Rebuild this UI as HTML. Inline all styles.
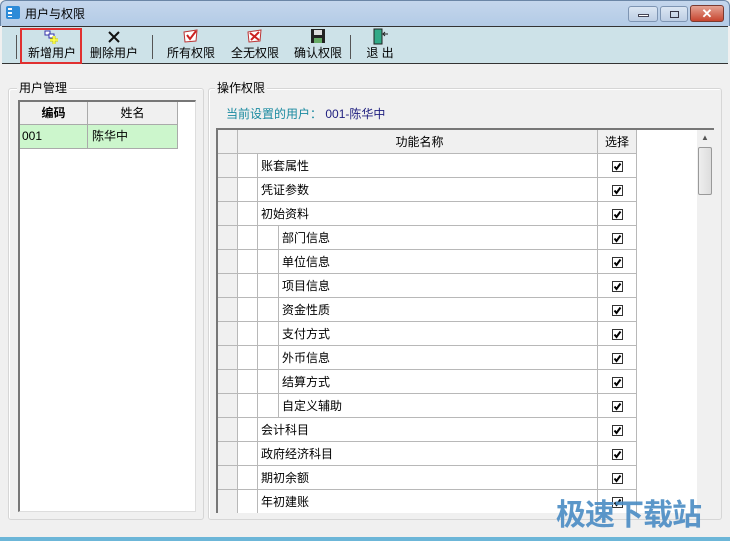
<!DOCTYPE html><html><head><meta charset="utf-8"><style>
*{box-sizing:border-box;margin:0;padding:0}
body{width:730px;height:541px;overflow:hidden;background:#f0f0f0;font-family:"Liberation Sans","Noto Sans CJK SC","WenQuanYi Zen Hei",sans-serif;font-size:12px;color:#000;position:relative}
.a{position:absolute}
.title{left:0;top:0;width:730px;height:26px;background:linear-gradient(#c4d6ec,#b3cbe6);border:1px solid #6b86a6;border-bottom:none;border-radius:6px 6px 0 0}
.tb{left:2px;top:26px;width:726px;height:38px;background:#cde2e8;border-top:1px solid #333;border-bottom:1px solid #333}
.btn{position:absolute;top:0;height:36px;text-align:center;font-size:12px;line-height:14px}
.btn span{position:absolute;bottom:3px;left:0;right:0}
.sep{position:absolute;top:8px;width:1px;height:24px;background:#555}
.gb{border:1px solid #d6d6d6;border-radius:3px;box-shadow:inset 1px 1px 0 #fff}
table{border-collapse:collapse}
td{border:1px solid #b8b8b8;height:24px;padding:0 0 0 4px;white-space:nowrap}
.cb{display:inline-block;width:11px;height:11px;border:1px solid #333;background:#fff;position:relative;vertical-align:middle}
.cb svg{position:absolute;left:0;top:0}
</style></head><body>
<div class="a title"></div>
<div class="a" style="left:6px;top:6px;width:14px;height:13px;background:#2d8bd8;border-radius:2px"></div>
<div class="a" style="left:8px;top:8px;width:4px;height:2px;background:#fff"></div><div class="a" style="left:8px;top:12px;width:4px;height:2px;background:#fff"></div><div class="a" style="left:8px;top:16px;width:4px;height:1px;background:#fff"></div>
<div class="a" style="left:25px;top:5px;font-size:12px">用户与权限</div>
<div class="a" style="left:628px;top:6px;width:30px;height:16px;border:1px solid #7e95b3;border-radius:3px;background:linear-gradient(#dbe6f3,#bccde3)"><div class="a" style="left:9px;top:7px;width:11px;height:3px;background:#fff;border:1px solid #445"></div></div>
<div class="a" style="left:660px;top:6px;width:28px;height:16px;border:1px solid #7e95b3;border-radius:3px;background:linear-gradient(#dbe6f3,#bccde3)"><div class="a" style="left:9px;top:4px;width:9px;height:7px;border:1px solid #334"></div></div>
<div class="a" style="left:690px;top:5px;width:34px;height:17px;border:1px solid #7a3a30;border-radius:3px;background:linear-gradient(#e5a393,#c7452f);color:#fff;font-weight:bold;text-align:center;font-size:13px;line-height:15px">✕</div>
<div class="a tb">
<div class="sep" style="left:14px"></div>
<div class="btn" style="left:20px;width:60px"><svg class="a" style="left:22px;top:2px" width="16" height="16"><rect x="1" y="2" width="5" height="4" fill="#fff" stroke="#33a"/><rect x="5" y="5" width="5" height="4" fill="#fff" stroke="#33a"/><path d="M10 7v8M6 11h8" stroke="#cc0" stroke-width="3"/><path d="M10 7v8M6 11h8" stroke="#ff5" stroke-width="1.5"/></svg><span>新增用户</span></div>
<div class="btn" style="left:84px;width:56px"><svg class="a" style="left:21px;top:3px" width="14" height="14"><path d="M2 2L12 12M12 2L2 12" stroke="#111" stroke-width="2"/></svg><span>删除用户</span></div>
<div class="sep" style="left:150px"></div>
<div class="btn" style="left:160px;width:58px"><svg class="a" style="left:20px;top:2px" width="18" height="16"><path d="M2 3L15 1L14 12L3 13Z" fill="#fff" stroke="#b33"/><path d="M5 6L8 10L14 2" stroke="#c22" stroke-width="2" fill="none"/></svg><span>所有权限</span></div>
<div class="btn" style="left:224px;width:58px"><svg class="a" style="left:20px;top:2px" width="18" height="16"><path d="M2 3L15 1L14 12L3 13Z" fill="#fff" stroke="#b33"/><path d="M4 4L13 11M13 3L5 11" stroke="#c22" stroke-width="2"/></svg><span>全无权限</span></div>
<div class="btn" style="left:287px;width:58px"><svg class="a" style="left:22px;top:2px" width="14" height="15"><rect x="0" y="0" width="14" height="14" fill="#222"/><rect x="3" y="1" width="8" height="5" fill="#ddd"/><rect x="3" y="9" width="8" height="5" fill="#6a6"/></svg><span>确认权限</span></div>
<div class="sep" style="left:348px"></div>
<div class="btn" style="left:358px;width:40px"><svg class="a" style="left:12px;top:1px" width="16" height="17"><rect x="2" y="1" width="8" height="15" fill="#3a8" stroke="#222"/><path d="M11 6h5M13 4l-2 2 2 2" stroke="#222" fill="none"/></svg><span>退 出</span></div>
</div>
<div class="a" style="left:20px;top:28px;width:62px;height:36px;border:2px solid #e03030"></div>
<div class="a gb" style="left:8px;top:88px;width:196px;height:432px"></div>
<div class="a" style="left:17px;top:79px;background:#f0f0f0;padding:0 2px">用户管理</div>
<div class="a" style="left:18px;top:100px;width:178px;height:412px;background:#fff;border-left:2px solid #777;border-top:2px solid #777;border-right:1px solid #ddd;border-bottom:1px solid #ddd"></div>
<div class="a" style="left:20px;top:102px;width:68px;height:23px;background:#f0f0f0;border-right:1px solid #aaa;border-bottom:1px solid #aaa;text-align:center;line-height:22px;font-weight:bold">编码</div>
<div class="a" style="left:88px;top:102px;width:90px;height:23px;background:#f0f0f0;border-right:1px solid #aaa;border-bottom:1px solid #aaa;text-align:center;line-height:22px">姓名</div>
<div class="a" style="left:20px;top:125px;width:68px;height:24px;background:#ccf6cc;border-right:1px solid #aaa;border-bottom:1px solid #aaa;line-height:23px;padding-left:2px">001</div>
<div class="a" style="left:88px;top:125px;width:90px;height:24px;background:#ccf6cc;border-right:1px solid #aaa;border-bottom:1px solid #aaa;line-height:23px;padding-left:4px">陈华中</div>
<div class="a gb" style="left:208px;top:88px;width:514px;height:432px"></div>
<div class="a" style="left:215px;top:79px;background:#f0f0f0;padding:0 2px">操作权限</div>
<div class="a" style="left:226px;top:105px;color:#1a8aa0">当前设置的用户： <span style="color:#202080">001-陈华中</span></div>
<div class="a" style="left:216px;top:128px;width:498px;height:385px;background:#fff;border-left:2px solid #777;border-top:2px solid #777;overflow:hidden">
<table style="position:absolute;left:-1px;top:-1px">
<tr style="background:#f0f0f0"><td style="width:20px"></td><td colspan="3" style="text-align:center;width:360px">功能名称</td><td style="width:39px;text-align:center;padding:0">选择</td></tr>
</table>
<div id="rows"></div>
<div class="a" style="right:0;top:0;width:17px;height:385px;background:#f0f0f0"><div class="a" style="left:4px;top:3px;font-size:8px;color:#555">▲</div><div class="a" style="left:1px;top:17px;width:14px;height:48px;border:1px solid #999;border-radius:2px;background:linear-gradient(90deg,#eee,#ddd)"></div></div>
</div>
<script>
var items=[["账套属性",0],["凭证参数",0],["初始资料",0],["部门信息",1],["单位信息",1],["项目信息",1],["资金性质",1],["支付方式",1],["外币信息",1],["结算方式",1],["自定义辅助",1],["会计科目",0],["政府经济科目",0],["期初余额",0],["年初建账",0]];
var cb='<span class="cb"><svg width="9" height="9"><path d="M1.5 4.5L3.5 7L7.5 1.5" stroke="#000" stroke-width="2" fill="none"/></svg></span>';
var h='<table style="position:absolute;left:-1px;top:23px">';
items.forEach(function(it){
h+='<tr><td style="width:20px;background:#f0f0f0"></td>';
if(it[1]) h+='<td style="width:20px"></td><td style="width:21px"></td><td style="width:319px;padding-left:3px">'+it[0]+'</td>';
else h+='<td style="width:20px"></td><td colspan="2" style="width:340px;padding-left:3px">'+it[0]+'</td>';
h+='<td style="width:39px;text-align:center;padding:0">'+cb+'</td></tr>';});
document.getElementById('rows').innerHTML=h+'</table>';
</script>
<div class="a" style="left:0;top:537px;width:730px;height:4px;background:#6cb6d8"></div>
<div class="a" style="left:556px;top:490px;font-size:30px;font-weight:bold;color:#4a8cc4;letter-spacing:-1px;opacity:.9">极速下载站</div>
</body></html>
